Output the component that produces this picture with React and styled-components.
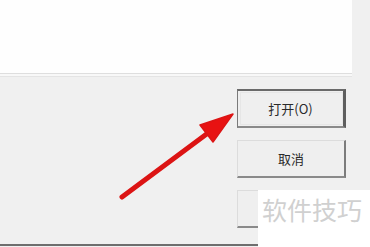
import styled, { createGlobalStyle } from "styled-components";

const GlobalStyle = createGlobalStyle`
  html, body {
    margin: 0;
    padding: 0;
    background: #f0f0f0;
  }
`;

const Window = styled.div`
  position: relative;
  width: 370px;
  height: 247px;
  overflow: hidden;
  background: #f0f0f0;
  display: flex;
  flex-direction: column;
  font-family: "Noto Sans CJK SC", "Noto Sans", sans-serif;
`;

const FileList = styled.div`
  width: 352px;
  height: 73px;
  background: #fefefe;
  border-bottom: 1px solid #dedede;
  box-shadow: 0 2px 0 #f8f8f8, 0 3px 0 #e4e4e4;
`;

const Footer = styled.div`
  flex: 1;
  display: flex;
  border-bottom: 2px solid #6e6e6e;
  margin-bottom: 1px;
`;

const Spacer = styled.div`
  width: 237px;
`;

const ButtonColumn = styled.div`
  width: 109px;
  padding-top: 15px;
  display: flex;
  flex-direction: column;
  gap: 12px;
`;

const Button = styled.button`
  box-sizing: border-box;
  height: ${({ $h }) => $h}px;
  width: 100%;
  margin: 0;
  padding: 0;
  font-family: inherit;
  font-size: 13px;
  color: #2a2a2a;
  background: #efefef;
  border-style: solid;
  border-width: ${({ $primary }) => ($primary ? "2px 3px 2px 1px" : "1px 2px 2px 1px")};
  border-color: ${({ $primary }) =>
    $primary ? "#6a6a6a #5e5e5e #8a8a8a #7a7a7a" : "#dcdcdc #7c7c7c #8a8a8a #dcdcdc"};
  outline: 1px solid ${({ $primary }) => ($primary ? "#e6e6e6" : "transparent")};
  outline-offset: -4px;
`;

const Arrow = styled.svg`
  position: absolute;
  left: 0;
  top: 0;
  pointer-events: none;
`;

const Watermark = styled.div`
  position: absolute;
  left: 258px;
  top: 190px;
  width: 112px;
  height: 57px;
  background: #ffffff;
  box-sizing: border-box;
  padding: 4px 0 0 4px;
  font-size: 25px;
  line-height: 30px;
  color: #d0d0d0;
  white-space: nowrap;
`;

export default function App() {
  return (
    <>
      <GlobalStyle />
      <Window>
        <FileList />
        <Footer>
          <Spacer />
          <ButtonColumn>
            <Button $primary $h={39}>打开(O)</Button>
            <Button $h={38}>取消</Button>
            <Button $h={38} />
          </ButtonColumn>
        </Footer>
        <Arrow width="370" height="247" viewBox="0 0 370 247">
          <line x1="122" y1="197" x2="212" y2="130" stroke="#dc1414" strokeWidth="5" strokeLinecap="round" />
          <polygon points="233,114 200,125 213,142" fill="#e81212" stroke="#dc1414" strokeWidth="1.5" strokeLinejoin="round" />
        </Arrow>
        <Watermark>软件技巧</Watermark>
      </Window>
    </>
  );
}
